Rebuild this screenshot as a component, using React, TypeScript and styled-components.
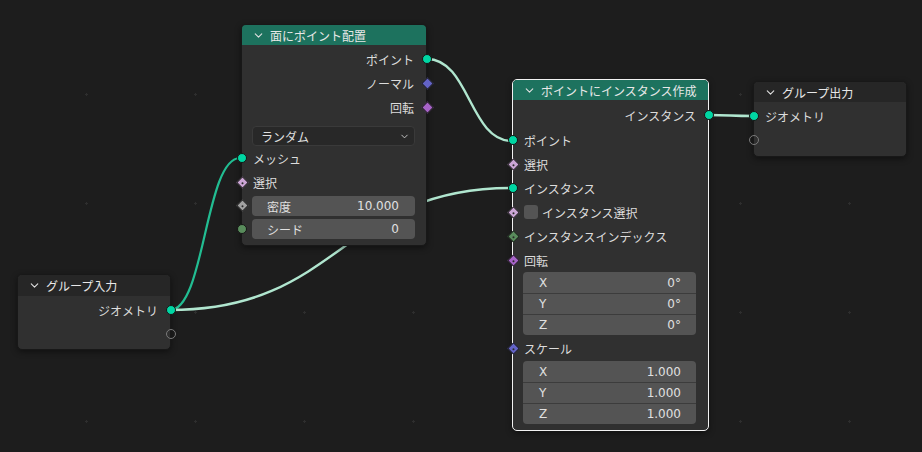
import * as React from 'react';
import styled, { createGlobalStyle, css } from 'styled-components';
import { ChevronDown } from 'lucide-react';

const GlobalStyle = createGlobalStyle`
  html, body { margin: 0; padding: 0; background: #1d1d1d; }
  body {
    font-family: "DejaVu Sans", "Noto Sans CJK JP", sans-serif;
    font-size: 12px;
    color: #dcdcdc;
  }
`;

const C = {
  geo: '#00d6a3',
  bool: '#cca6d6',
  vector: '#6363c7',
  rotation: '#a663c7',
  float: '#a1a1a1',
  int: '#598c5c',
};

const Canvas = styled.div`
  position: relative;
  width: 922px;
  height: 452px;
  overflow: hidden;
  background-color: #1d1d1d;
  background-image: radial-gradient(circle, #2e2e2e 1px, transparent 1.4px);
  background-size: 109px 109px;
  background-position: 32px 40px;
`;

const Links = styled.svg`
  position: absolute;
  inset: 0;
  z-index: 0;
`;

const Node = styled.div<{ $x: number; $y: number; $w: number; $selected?: boolean }>`
  position: absolute;
  left: ${(p) => p.$x}px;
  top: ${(p) => p.$y}px;
  width: ${(p) => p.$w}px;
  box-sizing: border-box;
  z-index: 1;
  background: #303030;
  border-radius: 5px;
  border: 1px solid ${(p) => (p.$selected ? '#f2f2f2' : '#181818')};
  box-shadow: 0 2px 6px rgba(0, 0, 0, 0.45);
  display: flex;
  flex-direction: column;
`;

const Header = styled.div<{ $kind: 'geo' | 'group'; $h?: number }>`
  height: ${(p) => p.$h ?? 20}px;
  display: flex;
  align-items: center;
  gap: 5px;
  padding-left: 10px;
  border-radius: 4px 4px 0 0;
  background: ${(p) => (p.$kind === 'geo' ? '#1d725e' : '#262626')};
  color: #e8e8e8;
  white-space: nowrap;
  overflow: hidden;
`;

const Body = styled.div<{ $top?: number; $bottom?: number }>`
  display: flex;
  flex-direction: column;
  padding: ${(p) => p.$top ?? 3}px 0 ${(p) => p.$bottom ?? 5}px;
`;

const Row = styled.div<{ $out?: boolean; $gap?: number }>`
  position: relative;
  height: 24px;
  display: flex;
  align-items: center;
  justify-content: ${(p) => (p.$out ? 'flex-end' : 'flex-start')};
  padding: 0 12px 0 11px;
  margin-top: ${(p) => p.$gap ?? 0}px;
  white-space: nowrap;
`;

const FieldRow = styled.div`
  position: relative;
  height: 23px;
  padding: 2px 11px 0 10px;
  box-sizing: border-box;
`;

const Field = styled.div`
  height: 20px;
  display: flex;
  align-items: center;
  justify-content: space-between;
  padding: 0 16px 0 15px;
  background: #545454;
  border-radius: 4px;
  color: #e0e0e0;
`;

const Vector = styled.div<{ $gap?: number }>`
  margin: ${(p) => p.$gap ?? 0}px 12px 0 10px;
  border-radius: 4px;
  overflow: hidden;
  display: flex;
  flex-direction: column;
`;

const VectorItem = styled.div`
  height: 21px;
  box-sizing: border-box;
  display: flex;
  align-items: center;
  justify-content: space-between;
  padding: 0 15px 0 16px;
  background: #545454;
  color: #e0e0e0;
  & + & { border-top: 1px solid #3c3c3c; }
`;

const Dropdown = styled.div`
  margin: 7px 11px 0 10px;
  height: 20px;
  box-sizing: border-box;
  display: flex;
  align-items: center;
  justify-content: space-between;
  padding: 0 4px 0 8px;
  background: #282828;
  border: 1px solid #3a3a3a;
  border-radius: 4px;
  color: #e0e0e0;
`;

const Check = styled.span`
  width: 14px;
  height: 14px;
  border-radius: 3px;
  background: #545454;
  margin-right: 4px;
  flex: none;
`;

type Shape = 'circle' | 'diamond' | 'ring';

const Socket = styled.span<{ $shape: Shape; $color?: string; $dot?: boolean; $side: 'left' | 'right' }>`
  position: absolute;
  top: 50%;
  ${(p) => (p.$side === 'left' ? 'left: -5px;' : 'right: -6px;')}
  box-sizing: border-box;
  z-index: 2;
  ${(p) =>
    p.$shape === 'diamond'
      ? css`
          width: 9px;
          height: 9px;
          margin-top: -4.5px;
          margin-left: ${p.$side === 'left' ? '0.5px' : '0'};
          margin-right: ${p.$side === 'right' ? '0.5px' : '0'};
          transform: rotate(45deg);
          background: ${p.$color};
          border: 1px solid #1a1a1a;
        `
      : p.$shape === 'ring'
      ? css`
          width: 10px;
          height: 10px;
          margin-top: -5px;
          border-radius: 50%;
          border: 1px solid #7a7a7a;
          background: transparent;
        `
      : css`
          width: 10px;
          height: 10px;
          margin-top: -5px;
          border-radius: 50%;
          background: ${p.$color};
          border: 1px solid #151515;
        `}
  ${(p) =>
    p.$dot &&
    css`
      &::after {
        content: '';
        position: absolute;
        left: 50%;
        top: 50%;
        width: 2px;
        height: 2px;
        margin: -1px 0 0 -1px;
        border-radius: 50%;
        background: #2a2a2a;
      }
    `}
`;

const Title = ({ text }: { text: string }) => (
  <>
    <ChevronDown size={13} strokeWidth={2} color="#e0e0e0" />
    <span>{text}</span>
  </>
);

function link(x1: number, y1: number, x2: number, y2: number) {
  const h = Math.abs(x2 - x1) * 0.5;
  return `M${x1},${y1} C${x1 + h},${y1} ${x2 - h},${y2} ${x2},${y2}`;
}

export default function App() {
  return (
    <>
      <GlobalStyle />
      <Canvas>
        <Links width={922} height={452}>
          <path d={link(170, 310, 240, 158)} stroke="#22bd92" strokeWidth={2.2} fill="none" />
          <path d={link(170, 310, 512, 188)} stroke="#b0e6cf" strokeWidth={2.4} fill="none" />
          <path d={link(427, 59, 512, 141)} stroke="#b0e6cf" strokeWidth={2.4} fill="none" />
          <path d={link(708, 115, 753, 116)} stroke="#b0e6cf" strokeWidth={2.4} fill="none" />
        </Links>

        <Node $x={241} $y={24} $w={186}>
          <Header $kind="geo"><Title text="面にポイント配置" /></Header>
          <Body $top={2}>
            <Row $out>ポイント<Socket $side="right" $shape="circle" $color={C.geo} /></Row>
            <Row $out>ノーマル<Socket $side="right" $shape="diamond" $color={C.vector} /></Row>
            <Row $out>回転<Socket $side="right" $shape="diamond" $color={C.rotation} /></Row>
            <Dropdown>
              <span>ランダム</span>
              <ChevronDown size={11} strokeWidth={2} color="#cfcfcf" />
            </Dropdown>
            <Row>メッシュ<Socket $side="left" $shape="circle" $color={C.geo} /></Row>
            <Row>選択<Socket $side="left" $shape="diamond" $color={C.bool} $dot /></Row>
            <FieldRow>
              <Socket $side="left" $shape="diamond" $color={C.float} $dot />
              <Field><span>密度</span><span>10.000</span></Field>
            </FieldRow>
            <FieldRow>
              <Socket $side="left" $shape="circle" $color={C.int} />
              <Field><span>シード</span><span>0</span></Field>
            </FieldRow>
          </Body>
        </Node>

        <Node $x={512} $y={79} $w={197} $selected>
          <Header $kind="geo"><Title text="ポイントにインスタンス作成" /></Header>
          <Body $bottom={6}>
            <Row $out>インスタンス<Socket $side="right" $shape="circle" $color={C.geo} /></Row>
            <Row $gap={1}>ポイント<Socket $side="left" $shape="circle" $color={C.geo} /></Row>
            <Row>選択<Socket $side="left" $shape="diamond" $color={C.bool} $dot /></Row>
            <Row>インスタンス<Socket $side="left" $shape="circle" $color={C.geo} /></Row>
            <Row><Check />インスタンス選択<Socket $side="left" $shape="diamond" $color={C.bool} $dot /></Row>
            <Row>インスタンスインデックス<Socket $side="left" $shape="diamond" $color={C.int} $dot /></Row>
            <Row>回転<Socket $side="left" $shape="diamond" $color={C.rotation} $dot /></Row>
            <Vector>
              <VectorItem><span>X</span><span>0°</span></VectorItem>
              <VectorItem><span>Y</span><span>0°</span></VectorItem>
              <VectorItem><span>Z</span><span>0°</span></VectorItem>
            </Vector>
            <Row $gap={1}>スケール<Socket $side="left" $shape="diamond" $color={C.vector} $dot /></Row>
            <Vector $gap={1}>
              <VectorItem><span>X</span><span>1.000</span></VectorItem>
              <VectorItem><span>Y</span><span>1.000</span></VectorItem>
              <VectorItem><span>Z</span><span>1.000</span></VectorItem>
            </Vector>
          </Body>
        </Node>

        <Node $x={753} $y={81} $w={154}>
          <Header $kind="group"><Title text="グループ出力" /></Header>
          <Body $top={2} $bottom={4}>
            <Row>ジオメトリ<Socket $side="left" $shape="circle" $color={C.geo} /></Row>
            <Row><Socket $side="left" $shape="ring" /></Row>
          </Body>
        </Node>

        <Node $x={17} $y={274} $w={154}>
          <Header $kind="group" $h={21}><Title text="グループ入力" /></Header>
          <Body $top={2} $bottom={3}>
            <Row $out>ジオメトリ<Socket $side="right" $shape="circle" $color={C.geo} /></Row>
            <Row $out><Socket $side="right" $shape="ring" /></Row>
          </Body>
        </Node>
      </Canvas>
    </>
  );
}
